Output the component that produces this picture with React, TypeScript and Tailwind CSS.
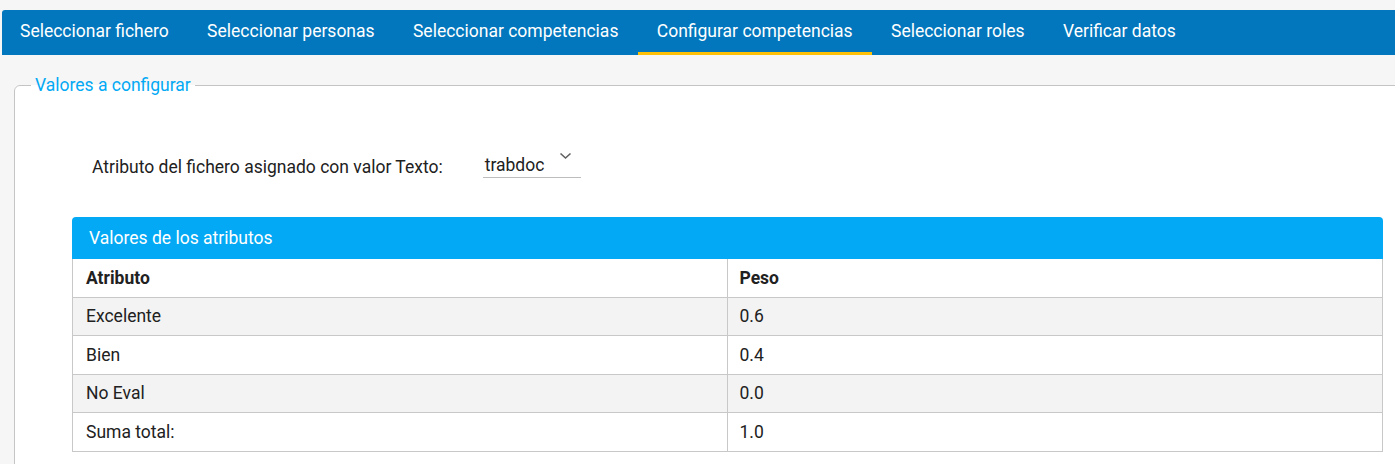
import React from "react";

const tabs = [
  "Seleccionar fichero",
  "Seleccionar personas",
  "Seleccionar competencias",
  "Configurar competencias",
  "Seleccionar roles",
  "Verificar datos",
];

const rows: [string, string][] = [
  ["Excelente", "0.6"],
  ["Bien", "0.4"],
  ["No Eval", "0.0"],
  ["Suma total:", "1.0"],
];

export default function App() {
  return (
    <div
      className="w-[1395px] h-[464px] overflow-hidden bg-[#f6f6f6] text-[#212121]"
      style={{ fontFamily: "Roboto, 'Noto Sans', sans-serif" }}
    >
      <div className="pt-[10px] pl-[2px]">
        <nav className="flex h-[45px] bg-[#0277bd] rounded-tl-[3px] pl-[0px]">
          {tabs.map((t, i) => (
            <div
              key={t}
              className={
                "flex items-center px-[19.2px] text-[17.5px] text-white leading-none border-b-[3px] pt-[1px] first:pl-[18px] " +
                (i === 3 ? "border-[#ffc107]" : "border-transparent")
              }
            >
              {t}
            </div>
          ))}
        </nav>
      </div>

      <fieldset className="ml-[14px] mt-[17px] w-[1420px] h-[500px] border border-[#c4c4c4] rounded-tl-[6px] bg-white pl-[16px]">
        <legend className="px-[4px] text-[17.5px] leading-[26px] text-[#03a9f4]">
          Valores a configurar
        </legend>

        <div className="-ml-[16px] pl-[77px] mt-[50px] flex items-end h-[30px]">
          <span className="text-[17.5px] leading-[24px] mb-[-1px] text-[#212121]">
            Atributo del fichero asignado con valor Texto:
          </span>
          <div className="ml-[40px] w-[98px] h-[32px] border-b border-[#bdbdbd] flex items-start justify-between pl-[2px] pr-[9px]">
            <span className="text-[17.5px] leading-[24px] mt-[7px]">trabdoc</span>
            <svg width="13" height="8" viewBox="0 0 13 8" className="mt-[6px]">
              <path d="M1.5 1.5 L6.5 6 L11.5 1.5" fill="none" stroke="#616161" strokeWidth="1.6" />
            </svg>
          </div>
        </div>

        <div className="-ml-[16px] pl-[57px] mt-[39px]">
          <div className="w-[1311px]">
            <div className="h-[42px] bg-[#03a9f4] rounded-t-[4px] flex items-center pl-[17px] text-white text-[17.5px]">
              Valores de los atributos
            </div>
            <div className="border-l border-r border-[#c8c8c8] text-[17.5px]">
              <div className="grid grid-cols-2 h-[38.5px] border-b border-[#c8c8c8] bg-white font-bold">
                <div className="flex items-center px-[13px] border-r border-[#c8c8c8]">Atributo</div>
                <div className="flex items-center px-[12px]">Peso</div>
              </div>
              {rows.map(([a, b], i) => (
                <div
                  key={a}
                  className={
                    "grid grid-cols-2 h-[38.5px] border-b border-[#c8c8c8] " +
                    (i % 2 === 0 ? "bg-[#f3f3f3]" : "bg-white")
                  }
                >
                  <div className="flex items-center px-[13px] border-r border-[#c8c8c8]">{a}</div>
                  <div className="flex items-center px-[12px]">{b}</div>
                </div>
              ))}
            </div>
          </div>
        </div>
      </fieldset>
    </div>
  );
}
